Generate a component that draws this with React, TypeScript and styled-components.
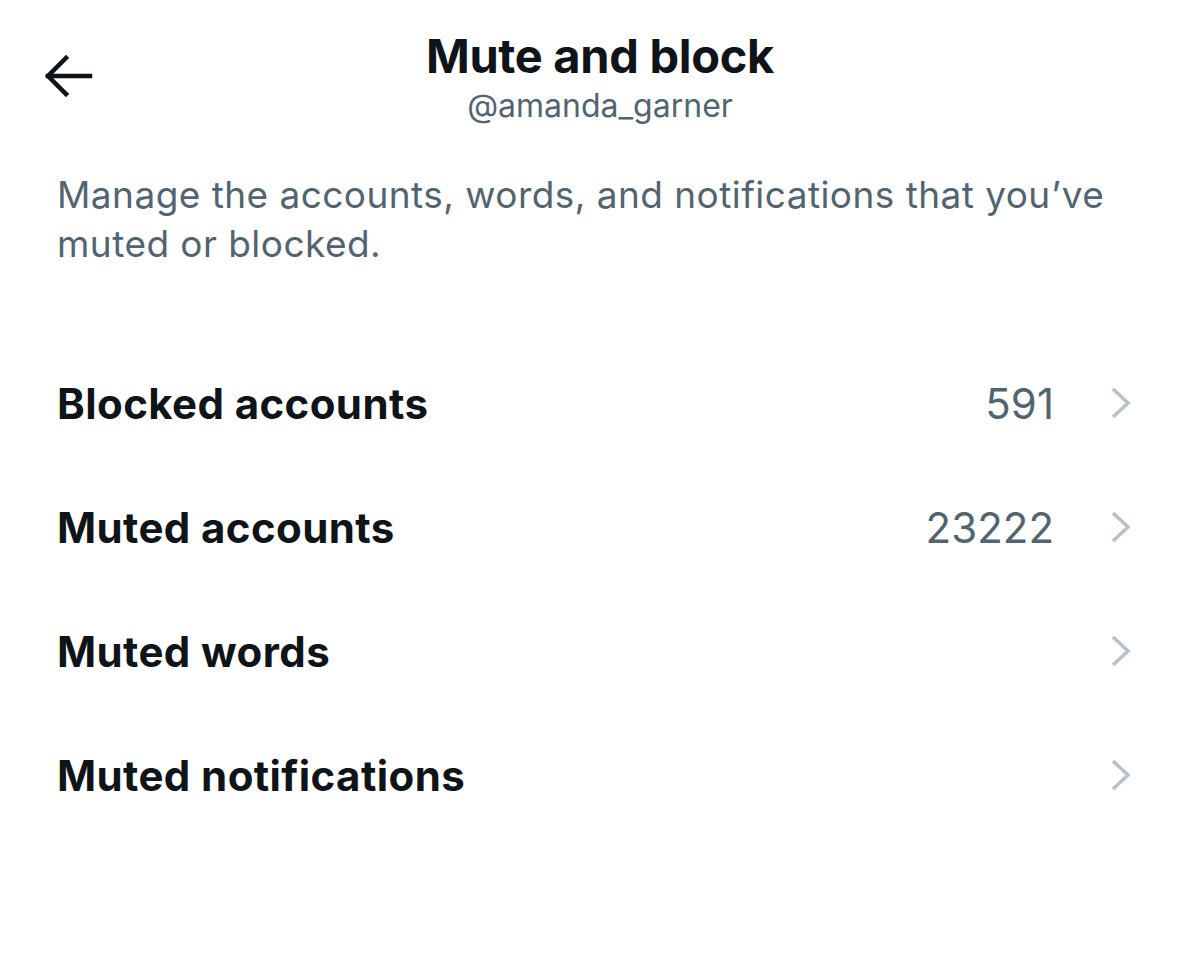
import React from 'react';
import styled, { createGlobalStyle } from 'styled-components';

const GlobalStyle = createGlobalStyle`
  html, body {
    margin: 0;
    padding: 0;
    background: #ffffff;
  }

  body {
    font-family: Inter, "Noto Sans", sans-serif;
    -webkit-font-smoothing: antialiased;
  }
`;

const ROWS = [
  { label: 'Blocked accounts', count: '591' },
  { label: 'Muted accounts', count: '23222' },
  { label: 'Muted words' },
  { label: 'Muted notifications' },
];

const BackArrow = () => (
  <svg width="52" height="44" viewBox="0 0 52 44" fill="none">
    <path
      d="M48 22H6M24 4L6 22L24 40"
      stroke="#0f1419"
      strokeWidth="4.5"
      strokeLinecap="square"
    />
  </svg>
);

const Chevron = () => (
  <svg width="22" height="34" viewBox="0 0 22 34" fill="none">
    <path d="M3 3L18 17L3 31" stroke="#b6c1c9" strokeWidth="3.5" />
  </svg>
);

const App = () => (
  <>
    <GlobalStyle />
    <Page>
      <Header>
        <BackButton aria-label="Back">
          <BackArrow />
        </BackButton>
        <TitleBlock>
          <Title>Mute and block</Title>
          <Handle>@amanda_garner</Handle>
        </TitleBlock>
        <span />
      </Header>
      <Description>
        Manage the accounts, words, and notifications that you’ve muted or
        blocked.
      </Description>
      <List>
        {ROWS.map((row) => (
          <Row key={row.label}>
            <RowLabel>{row.label}</RowLabel>
            {row.count && <Count>{row.count}</Count>}
            <ChevronBox>
              <Chevron />
            </ChevronBox>
          </Row>
        ))}
      </List>
    </Page>
  </>
);

export default App;

const Page = styled.div`
  width: 1200px;
  height: 966px;
  box-sizing: border-box;
  padding: 0 0 0 57px;
  overflow: hidden;
`;

const Header = styled.header`
  display: grid;
  grid-template-columns: 1fr auto 1fr;
  align-items: start;
  height: 160px;
  margin-left: -57px;
  padding-top: 26px;
  box-sizing: border-box;
`;

const BackButton = styled.button`
  justify-self: start;
  margin: 28px 0 0 42px;
  padding: 0;
  border: none;
  background: none;
  display: flex;
`;

const TitleBlock = styled.div`
  display: flex;
  flex-direction: column;
  align-items: center;
`;

const Title = styled.h1`
  margin: 0;
  font-size: 47px;
  line-height: 60px;
  font-weight: 700;
  letter-spacing: -0.3px;
  color: #0f1419;
`;

const Handle = styled.div`
  font-size: 32px;
  line-height: 40px;
  color: #536471;
`;

const Description = styled.p`
  margin: 10px 0 0;
  width: 1100px;
  font-size: 37px;
  line-height: 49px;
  color: #536471;
  letter-spacing: 0.45px;
`;

const List = styled.div`
  margin-top: 73px;
  display: flex;
  flex-direction: column;
`;

const Row = styled.div`
  height: 124px;
  display: flex;
  align-items: center;
  padding-right: 68px;
`;

const RowLabel = styled.div`
  flex: 1;
  font-size: 42px;
  font-weight: 700;
  color: #0f1419;
  letter-spacing: 0.4px;
`;

const Count = styled.div`
  font-size: 42px;
  color: #536471;
  margin-right: 56px;
`;

const ChevronBox = styled.div`
  display: flex;
`;
